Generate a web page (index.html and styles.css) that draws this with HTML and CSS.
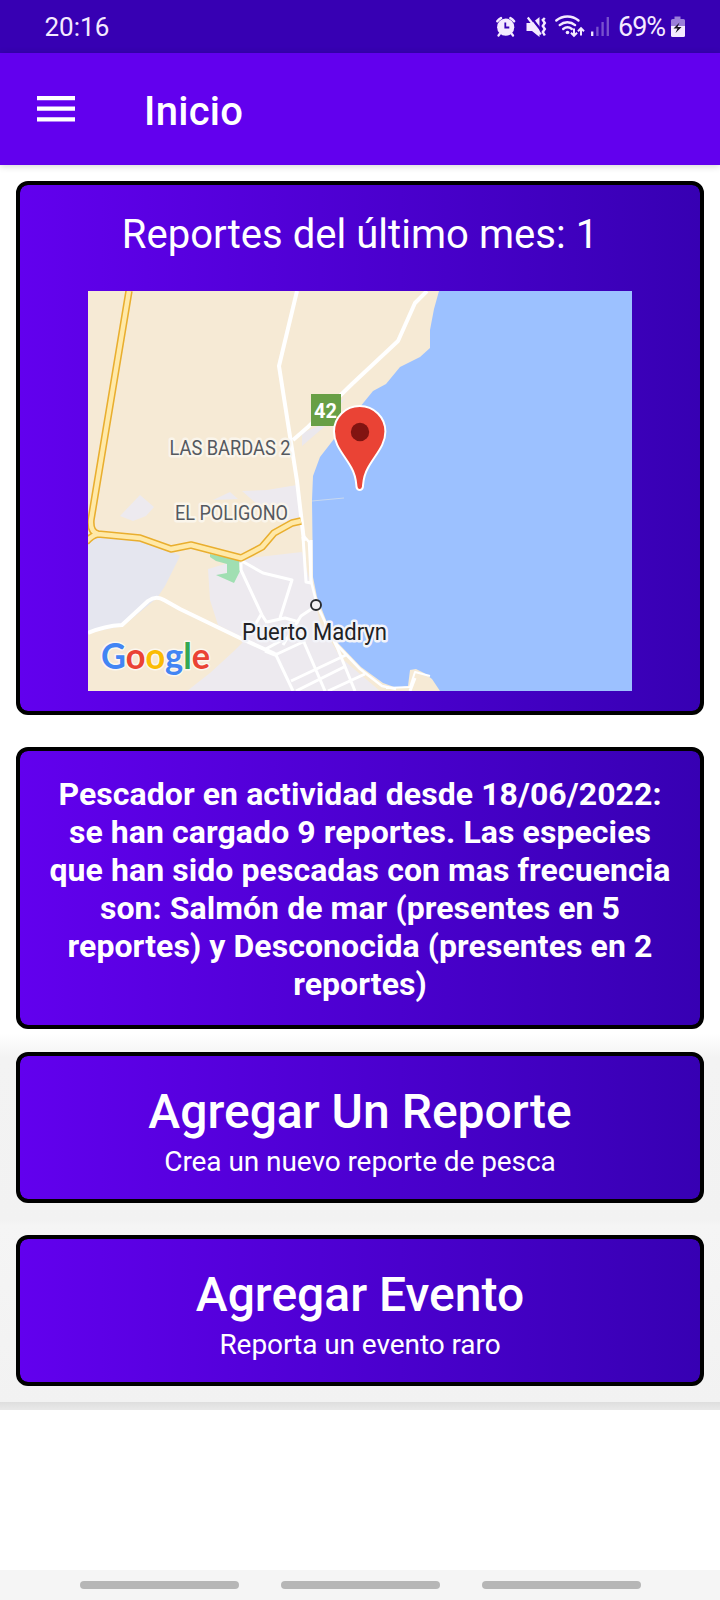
FILE: index.html
```html
<!DOCTYPE html>
<html lang="es">
<head>
<meta charset="utf-8">
<title>Inicio</title>
<link rel="stylesheet" href="styles.css">
</head>
<body>
<div class="status">
  <span class="clock">20:16</span>
  <svg class="indicators" viewBox="492 10 122 34" width="122" height="34" fill="none" stroke="#f4eaff">
    <g stroke-linecap="round">
      <circle cx="505.7" cy="27.2" r="8.6" fill="#f4eaff" stroke="none"/>
      <path d="M497.3 21.300a12 12 0 0 1 3.700-3.200M510.400 18.100a12 12 0 0 1 3.700 3.200" stroke-width="2.400"/>
      <path d="M500 33.500l-1.500 2M511.500 33.500l1.500 2" stroke-width="2.200"/>
      <path d="M505.300 22.500v5h4" stroke="#3700b3" stroke-width="1.800" stroke-linecap="butt"/>
    </g>
    <path d="M526.500 23h5.500l7.500-6v20l-7.500-6h-5.500z" fill="#f4eaff" stroke="none"/>
    <path d="M529.500 15.500l13 16.500" stroke="#3700b3" stroke-width="2.200"/>
    <path d="M527.800 17.500l13 17" stroke-width="2.200"/>
    <path d="M544.800 18l-2 2 2 3-2 3 2 3-2 3 2 3.500" stroke-width="2.400"/>
    <g stroke-width="2.400" stroke-linecap="round">
      <path d="M556.300 20.500a17.500 17.500 0 0 1 22.200 0M559.700 25.100a12 12 0 0 1 15.400 0M563.200 29a7 7 0 0 1 8.600 0"/>
      <circle cx="567.500" cy="32.500" r="1.800" fill="#f4eaff" stroke="none"/>
    </g>
    <path d="M574 28.500v7M571 32.800l3 3 3-3M581 35.500v-7M578 31.200l3-3 3 3" stroke-width="2"/>
    <g stroke-width="2.300">
      <path d="M592.200 31.500V36"/>
      <path d="M597.400 26.800V36M602.600 22V36M607.800 17V36" opacity=".35"/>
    </g>
  </svg>
  <span class="percent">69%</span>
  <svg class="battery" viewBox="670 14 16 25" width="16" height="25">
    <path d="M674.500 16.500h6v2.500h3q1.500 0 1.500 1.500V27h-14v-6.500q0-1.500 1.500-1.500h2z" fill="#9b7fd9"/>
    <path d="M671 26h14v9.500q0 1.500-1.500 1.500h-11q-1.500 0-1.500-1.500z" fill="#f4eaff"/>
    <path d="M679.500 22.500l-6 6h4l-2 4.500 6-6h-4z" fill="#171020"/>
  </svg>
</div>
<header class="appbar">
  <svg class="menu" viewBox="0 0 38 26" width="38" height="26"><path d="M0 2.200h38M0 12.700h38M0 23.300h38" stroke="#fff" stroke-width="4.200"/></svg>
  <h1>Inicio</h1>
</header>
<main>
  <section class="card map-card">
    <h2>Reportes del último mes: 1</h2>
    <svg class="map" viewBox="88 291 544 400" width="544" height="400">
      <rect x="88" y="291" width="544" height="400" fill="#f6ead5"/>
      <path d="M88 536l50 4 35 12 7 4-15 30-8 12-34 28-35 7z" fill="#e5e6ef"/>
      <path d="M120 516l20-21 14 12-8 9-13 5zM213 500l17-8 8 7zM242 491l25-1 30-5 5 36-12 4-18-8z" fill="#edeaef"/>
      <path d="M302 433l19-8 7-14 18-14-22 30-22 19z" fill="#ebe8ed"/>
      <path d="M208 569l34-10 60-7 8 30 10 40 20 35 40 34H187l23-18 24-22 12-12-28-14-8-25z" fill="#edeaef"/>
      <path d="M210 554l29 6 1 11-6 12-18-8 11-2v-9l-11-3-6-4z" fill="#a0dfb2"/>
      <path d="M439 291l-5 18-4 21v18l-10 9-20 10-14 17-13 7-13 16-26 32-14 18-7 19-1 24 1 77 4 20 9 23 12 23 23 24 22 16 14 5 11-2 2-16 6-1 8 4 8 6 8 12H632V291z" fill="#9cc1ff"/>
      <g fill="none" stroke="#fff" stroke-linejoin="round">
        <path d="M297 291l-18 75 10 64 8 51 7 60" stroke-width="4"/>
        <path d="M427 291l-12 12-17 38-46 43-44 43-15 13" stroke-width="4"/>
        <path d="M303 535l6 7 2 39 6 24 8 17 12 23 23 24 22 17 14 3" stroke-width="2.600"/>
        <path d="M88 633q16-7 34-8l26-24q8-6 16-1l16 9 60 29 35 16" stroke-width="4"/>
        <path d="M240 560l23 13 29 7-12 38M241 563v7l21 45 5 8M262 613l-7 12M267 622l18-4 14 4M313 608l-12 8-18 29" stroke-width="3"/>
        <path d="M265 651l10 4 30-14M264 650l20-11M303 537l3 45 5 1v-43" stroke-width="3"/>
        <path d="M275 653l18 38M300 633l25 58M325 622l12 25 18 44M291 681l55-26M296 691l48-24M328 691l37-17M410 691l5-13" stroke-width="3"/>
        <path d="M386 688l24-1 5-15 15 4" stroke-width="2"/>
      </g>
      <path d="M312 501l32-3" fill="none" stroke="#c8d8ef" stroke-width="1"/>
      <g fill="none" stroke-linejoin="round">
        <path d="M129 291L91 520q-1 12 7 14l42 4 31 11 20-4 50 13 21-11 12-14 18-10 9-2M98 534q-6 1-12 8" stroke="#e9ae2e" stroke-width="7.500"/>
        <path d="M129 291L91 520q-1 12 7 14l42 4 31 11 20-4 50 13 21-11 12-14 18-10 9-2M98 534q-6 1-12 8" stroke="#ffe9a8" stroke-width="4.400"/>
      </g>
      <rect x="311" y="394" width="30" height="32" fill="#689f45"/>
      <text x="325.500" y="418" class="shield" text-anchor="middle">42</text>
      <g class="district">
        <text x="169.500" y="455" textLength="121" lengthAdjust="spacingAndGlyphs">LAS BARDAS 2</text>
        <text x="175" y="519.500" textLength="113" lengthAdjust="spacingAndGlyphs">EL POLIGONO</text>
      </g>
      <circle cx="316" cy="605" r="5" fill="#f3f1f3" stroke="#292b2e" stroke-width="1.900"/>
      <text x="242" y="639.500" class="city" textLength="145" lengthAdjust="spacingAndGlyphs">Puerto Madryn</text>
      <path d="M359.700 406c-14.300 0-25.700 11.400-25.700 25.500 0 14 10 23 17.500 36.500 4.500 8 4.500 13 5 19q.7 3 3.200 3t3.200-3c.5-6 .5-11 5-19 7.500-13.500 17.500-22.500 17.500-36.500 0-14.100-11.400-25.500-25.700-25.500z" fill="#ea4335" stroke="#fff" stroke-width="2"/>
      <circle cx="360" cy="432" r="9.200" fill="#811411"/>
      <text x="101" y="668.500" class="logo" textLength="109" lengthAdjust="spacingAndGlyphs"><tspan fill="#4285f4">G</tspan><tspan fill="#ea4335">o</tspan><tspan fill="#fbbc04">o</tspan><tspan fill="#4285f4">g</tspan><tspan fill="#34a853">l</tspan><tspan fill="#ea4335">e</tspan></text>
    </svg>
  </section>
  <section class="card summary">
    <p>Pescador en actividad desde 18/06/2022:<br>se han cargado 9 reportes. Las especies<br>que han sido pescadas con mas frecuencia<br>son: Salmón de mar (presentes en 5<br>reportes) y Desconocida (presentes en 2<br>reportes)</p>
  </section>
  <div class="actions">
    <div class="slot"><button class="card action"><strong>Agregar Un Reporte</strong><span>Crea un nuevo reporte de pesca</span></button></div>
    <div class="slot second"><button class="card action"><strong>Agregar Evento</strong><span>Reporta un evento raro</span></button></div>
  </div>
</main>
<nav class="navbar"><i></i><i></i><i></i></nav>
</body>
</html>
```
FILE: styles.css
```css
* { box-sizing: border-box; }
body {
  margin: 0;
  width: 720px;
  height: 1600px;
  display: flex;
  flex-direction: column;
  background: #fff;
  color: #fff;
  font-family: Roboto, "Liberation Sans", sans-serif;
  overflow: hidden;
}
h1, h2, p { margin: 0; }
svg { display: block; flex: none; }
.status {
  height: 53px;
  flex: none;
  display: flex;
  align-items: center;
  background: #3700b3;
  color: #f4eaff;
  padding: 0 34px 0 44.500px;
  font-size: 27px;
}
.clock { margin-right: auto; font-size: 26px; }
.percent { margin: 0 4px 0 4px; width: 48px; white-space: nowrap; letter-spacing: -1px; }
.appbar {
  height: 112px;
  flex: none;
  display: flex;
  align-items: center;
  gap: 69px;
  padding-left: 37px;
  background: #6200ee;
  box-shadow: 0 1px 7px rgba(0, 0, 0, .18);
}
.menu { margin-bottom: 1px; }
h1 { font-size: 40px; font-weight: 500; line-height: 48px; padding-top: 5px; letter-spacing: .3px; }
main { flex: 1; }
.card {
  display: block;
  width: 688px;
  margin: 0 16px;
  border: 4px solid #000;
  border-radius: 12px;
  background: linear-gradient(90deg, #6200ee, #3700b3) padding-box, #000 border-box;
  text-align: center;
  color: #fff;
  font-family: inherit;
}
.map-card { height: 534px; margin-top: 16px; padding-top: 23px; }
h2 { font-size: 40px; font-weight: 400; line-height: 54px; letter-spacing: .04px; }
.map { margin: 29px auto 0; }
.shield { font-size: 20px; font-weight: 700; fill: #fff; }
.district { font-size: 20px; fill: #55595f; stroke: #faf5eb; stroke-width: 5px; paint-order: stroke; stroke-linejoin: round; }
.city { font-size: 23.500px; fill: #202124; stroke: #f3f4f9; stroke-width: 5px; paint-order: stroke; stroke-linejoin: round; }
.logo { font-family: Lato, sans-serif; font-size: 36px; font-weight: 700; stroke: #fbf7ef; stroke-width: 3px; paint-order: stroke; stroke-linejoin: round; }
.summary { height: 282px; margin-top: 32px; padding-top: 24px; font-size: 32px; font-weight: 700; line-height: 38px; letter-spacing: .07px; white-space: nowrap; }
.actions {
  height: 381px;
  background: linear-gradient(#fff, #fff 4px, #f3f3f3 28px, #f2f2f2 190px, #f5f5f5 196px, #f2f2f2 373px, #dedede 373px, #e9e9e9 381px);
}
.slot { padding-top: 23px; height: 174px; }
.second { padding-top: 32px; height: 199px; }
.action { height: 151px; padding: 7px 0 0; display: flex; flex-direction: column; align-items: center; justify-content: center; }
.action strong { font-size: 48px; font-weight: 500; line-height: 56px; }
.action span { font-size: 28px; line-height: 33px; margin-top: 5px; letter-spacing: -.07px; }
.navbar {
  height: 30px;
  flex: none;
  display: flex;
  justify-content: center;
  gap: 42px;
  padding-top: 11px;
  background: #f5f5f5;
}
.navbar i { width: 159px; height: 8px; border-radius: 4px; background: #b6b6b6; }
```
